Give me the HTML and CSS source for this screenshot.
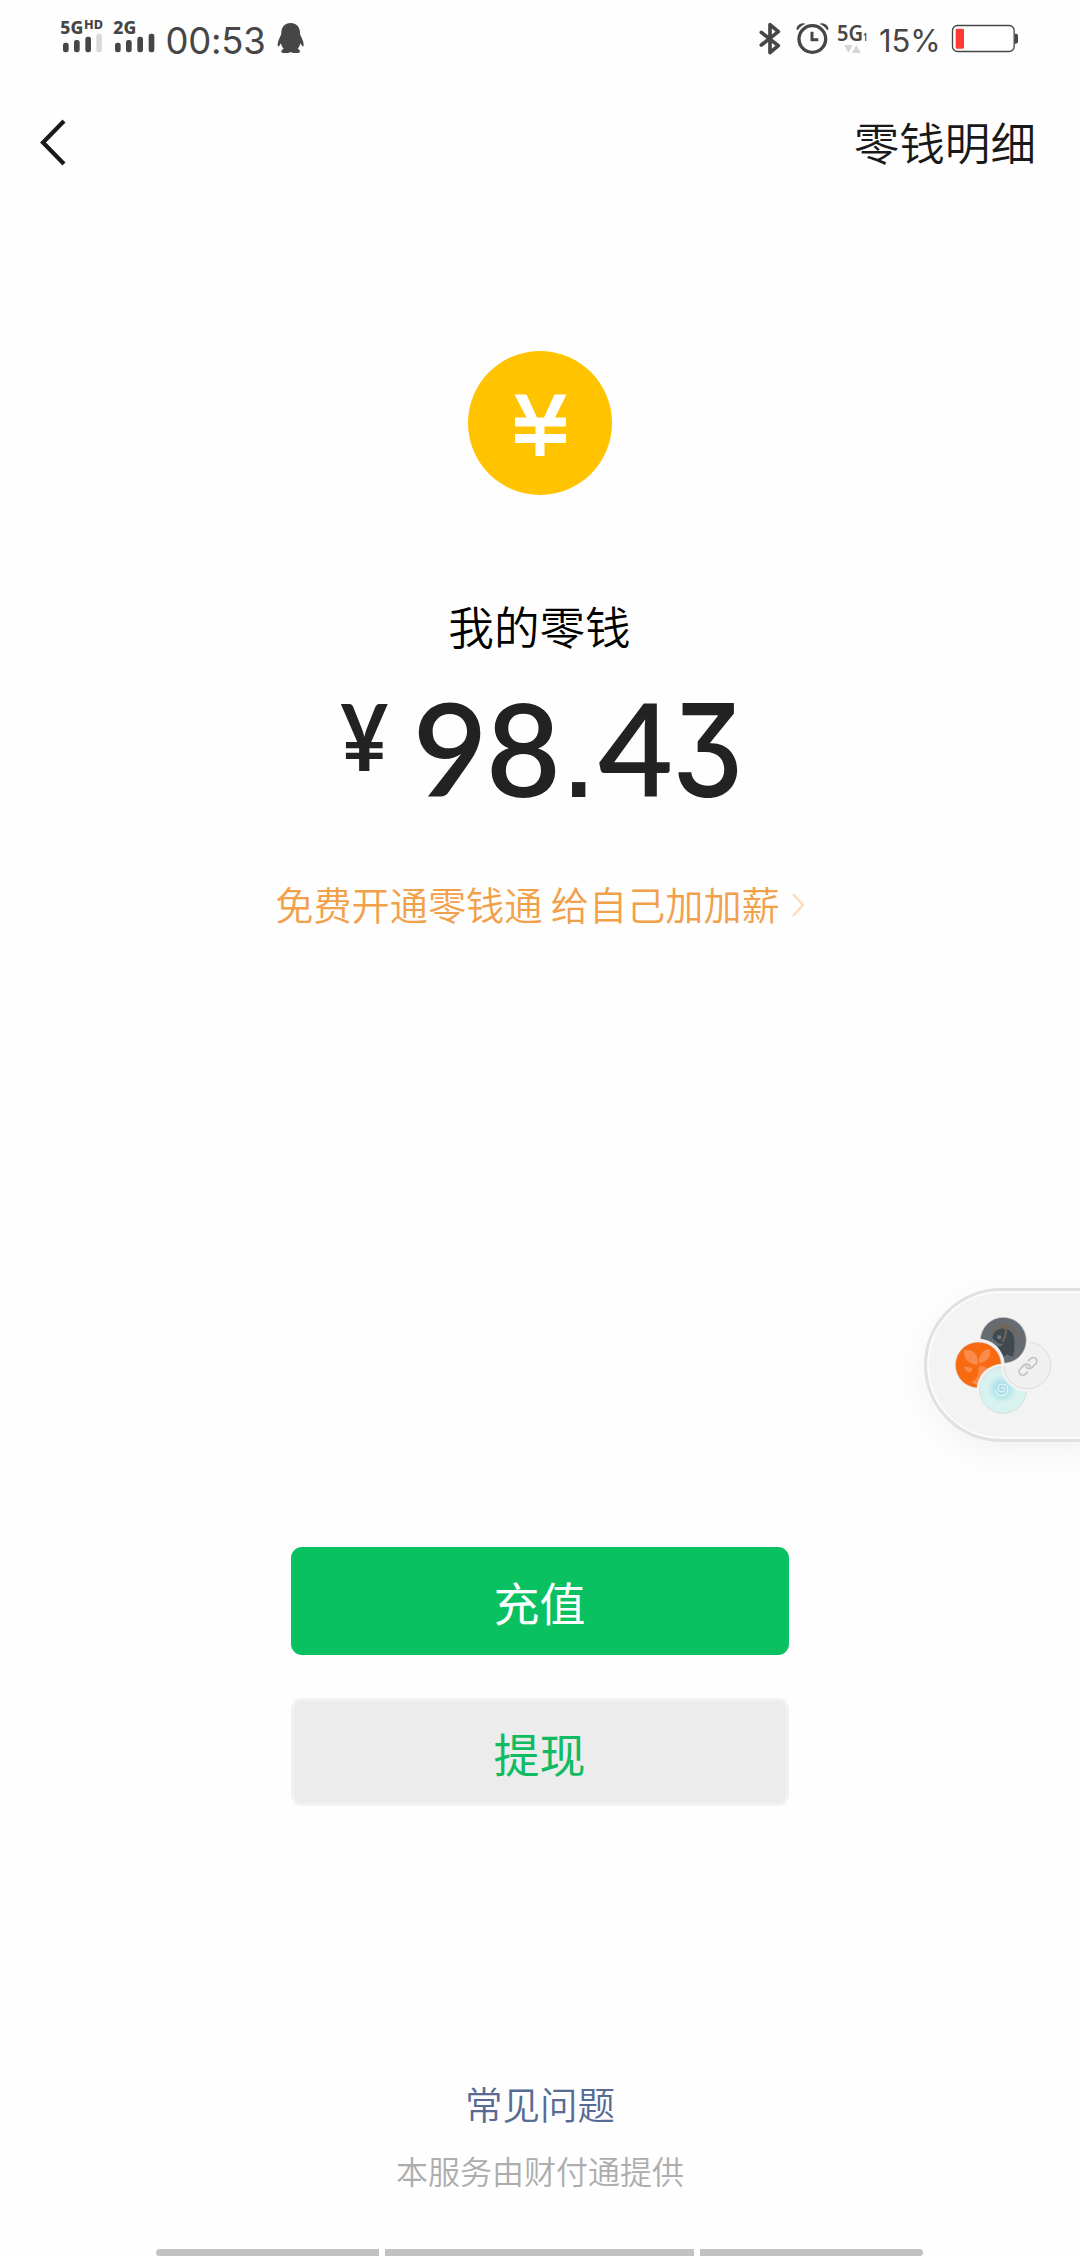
FILE: index.html
```html
<!DOCTYPE html>
<html lang="zh-CN">
<head>
<meta charset="utf-8">
<title>我的零钱</title>
<link rel="stylesheet" href="styles.css">
</head>
<body>
<div class="screen">
  <header class="status">
    <div class="status-left">
      <svg class="signals" viewBox="60 0 300 240">
        <text class="net" x="61" y="101" font-size="53" textLength="69" lengthAdjust="spacingAndGlyphs">5G</text>
        <text class="net" x="132" y="87" font-size="35" textLength="57" lengthAdjust="spacingAndGlyphs">HD</text>
        <text class="net" x="220" y="101" font-size="53" textLength="69" lengthAdjust="spacingAndGlyphs">2G</text>
        <g fill="#464646">
          <rect x="69" y="128" width="17" height="29" rx="7"/><rect x="102" y="120" width="17" height="37" rx="7"/><rect x="136" y="110" width="17" height="47" rx="7"/>
          <rect x="225" y="128" width="17" height="29" rx="7"/><rect x="258" y="120" width="17" height="37" rx="7"/><rect x="292" y="110" width="17" height="47" rx="7"/><rect x="326" y="101" width="17" height="56" rx="7"/>
        </g>
        <rect x="169" y="101" width="17" height="56" rx="7" fill="#dadada"/>
      </svg>
      <span class="clock">00:53</span>
      <svg class="penguin" viewBox="700 0 100 240">
        <path fill="#464646" d="M753 69c-18 0-28 13-28 29 0 5-1 7-3 11-4 9-9 19-8 28 0 3 3 3 5 0l5-7c1 6 4 12 8 16-4 2-7 5-7 9 0 3 5 4 13 4 7 0 12-1 15-3 3 2 8 3 15 3 8 0 13-1 13-4 0-4-3-7-7-9 4-4 7-10 8-16l5 7c2 3 4 3 5 0 1-9-4-19-8-28-2-4-3-6-3-11 0-16-10-29-28-29z"/>
      </svg>
    </div>
    <div class="status-right">
      <svg class="bluetooth" viewBox="50 0 80 240">
        <path d="M66 97l51 40-25 21V74l25 21-51 40" fill="none" stroke="#464646" stroke-width="11" stroke-linejoin="round" stroke-linecap="round"/>
      </svg>
      <svg class="alarm" viewBox="160 0 120 240">
        <g fill="none" stroke="#464646">
          <circle cx="218" cy="117" r="40" stroke-width="10"/>
          <path d="M217 95v24h19" stroke-width="9"/>
        </g>
        <path fill="#464646" d="M171 89c-2-10 9-20 22-19l4 2c-10 4-17 10-22 18zM266 89c2-10-9-20-22-19l-4 2c10 4 17 10 22 18z"/>
      </svg>
      <svg class="data" viewBox="285 0 120 240">
        <text class="data-label" x="291" y="123" font-size="66" textLength="78" lengthAdjust="spacingAndGlyphs">5G</text>
        <text class="data-label" x="369" y="123" font-size="34" textLength="14" lengthAdjust="spacingAndGlyphs">1</text>
        <path fill="#d6d6d6" d="M312 135h26l-13 24zM336 159h27l-14-24z"/>
      </svg>
      <span class="percent">15%</span>
      <svg class="battery" viewBox="630 0 210 240">
        <path fill="#464646" d="M824 101h4q6 0 6 7v16q0 7-6 7h-4z"/>
        <rect x="637.500" y="76.500" width="185" height="78" rx="15" fill="#fff" stroke="#464646" stroke-width="4"/>
        <rect x="647" y="86" width="25" height="60" rx="4" fill="#ff3b30"/>
      </svg>
    </div>
  </header>

  <nav class="nav">
    <svg class="back" viewBox="0 0 28 48"><path d="M25 2 4 23.500 25 45" fill="none" stroke="#191919" stroke-width="4.200"/></svg>
    <a class="detail">零钱明细</a>
  </nav>

  <main class="wallet">
    <svg class="coin" viewBox="0 0 144 144">
      <circle cx="72" cy="72" r="72" fill="#ffc300"/>
      <path fill="#fff" d="M46.500 43.500h12L69 66.500h7L86.500 43.500h12L87 66.500h11v9H76.500v7.500H98v9H76.500v13h-9V92H47v-9h20.500v-7.500H47v-9h11.500z"/>
    </svg>
    <h1 class="label">我的零钱</h1>
    <div class="balance"><span class="yen">¥</span><span class="digits">98<span class="dot">.</span>4<span class="three">3</span></span></div>
    <a class="promo">免费开通零钱通 给自己加加薪<svg class="chevron" viewBox="0 0 12 24"><path d="M1 1l10 11L1 23" fill="none" stroke="#fbdcbd" stroke-width="2.400"/></svg></a>
    <div class="actions">
      <button class="btn primary">充值</button>
      <button class="btn secondary">提现</button>
    </div>
  </main>

  <footer class="foot">
    <a class="faq">常见问题</a>
    <p class="provider">本服务由财付通提供</p>
    <div class="gesture"><i class="bar first"></i><i class="bar middle"></i><i class="bar last"></i></div>
  </footer>

  <aside class="float">
    <svg class="float-icons" viewBox="150 155 320 320">
      <defs>
        <mask id="m1"><rect x="100" y="100" width="400" height="400" fill="#fff"/><circle cx="235" cy="314" r="79" fill="#000"/></mask>
        <mask id="m2"><rect x="100" y="100" width="400" height="400" fill="#fff"/><circle cx="309" cy="389" r="79" fill="#000"/></mask>
        <mask id="m3"><rect x="100" y="100" width="400" height="400" fill="#fff"/><circle cx="382" cy="315" r="79" fill="#000"/></mask>
        <mask id="m4"><rect x="100" y="100" width="400" height="400" fill="#fff"/><circle cx="310" cy="240" r="79" fill="#000"/></mask>
        <radialGradient id="sea"><stop offset="0" stop-color="#a0d0ef"/><stop offset=".4" stop-color="#abe2e8"/><stop offset="1" stop-color="#d8f2f0"/></radialGradient>
      </defs>
      <g mask="url(#m1)">
        <circle cx="310" cy="240" r="69" fill="#666c72" stroke="#d5d5d5" stroke-width="2"/>
        <path fill="#404850" d="M279 225c5-14 20-22 35-20 18 2 29 15 29 34v28c0 9-5 14-2 20-8 2-16-2-20-5-3 5-9 7-18 5-8-12-14-20-14-30 9 3 18 0 21-7-10 2-19-2-24-8-6-5-10-8-7-17z"/>
        <circle cx="298" cy="231" r="6" fill="#737b82"/>
        <path fill="none" stroke="#766550" stroke-width="6" d="M275 220c15-34 65-34 78 12M315 198c6 17 2 32-7 47"/>
      </g>
      <g mask="url(#m2)">
        <circle cx="235" cy="314" r="69" fill="#f76a12" stroke="#ddd" stroke-width="2"/>
        <path fill="#fa8b4a" d="M192 270c27-5 45 12 41 43-27 0-43-18-41-43zM269 266c5 23-7 41-32 41-1-23 10-39 32-41zM192 321c11-2 21-1 26 6-5 13-21 11-26-6zM236 319c12-3 22 1 31 9l-18 14-14 35-23-12c18-4 25-22 24-46z"/>
      </g>
      <g mask="url(#m3)">
        <circle cx="309" cy="389" r="70" fill="#d8f2f0" stroke="#cfd5d5" stroke-width="2"/>
        <circle cx="306" cy="386" r="43" fill="url(#sea)"/>
        <path d="M306 387c-5-6 7-9 8-1 1 11-19 12-20-2-1-17 28-18 29 4 1 22-35 25-37 0" fill="none" stroke="#e1f5f8" stroke-width="4"/>
      </g>
      <g mask="url(#m4)">
        <circle cx="382" cy="315" r="70" fill="#f0f0f0" stroke="#cfcfcf" stroke-width="2"/>
        <g transform="translate(384 318) rotate(-45)" fill="none" stroke="#c2c2c2" stroke-width="5" stroke-linecap="round">
          <path d="M-13 11h-9a11 11 0 0 1 0-22h17a11 11 0 0 1 9 16"/>
          <path d="M13-11h9a11 11 0 0 1 0 22H5a11 11 0 0 1-9-16"/>
        </g>
      </g>
    </svg>
  </aside>
</div>
</body>
</html>
```
FILE: styles.css
```css
* { box-sizing: border-box; }

body {
  margin: 0;
  background: #fefefe;
  font-family: "Noto Sans CJK SC", sans-serif;
  font-weight: 350;
}

svg { display: block; flex: none; }

.screen {
  position: relative;
  display: flex;
  flex-direction: column;
  width: 1080px;
  height: 2256px;
  overflow: hidden;
}

.status {
  display: flex;
  justify-content: space-between;
  height: 80px;
  padding: 0 60px;
  color: #464646;
}

.status-left, .status-right { display: flex; align-items: center; }
.signals { width: 100px; height: 80px; }
.net { font-family: "Noto Sans", sans-serif; font-weight: 800; fill: #464646; }
.data-label { font-family: "Noto Sans", sans-serif; font-weight: 600; fill: #464646; }
.clock {
  width: 113px;
  padding: 1px 2px 0 0;
  text-align: center;
  font: 400 36.500px/80px Inter, sans-serif;
  letter-spacing: -.3px;
}
.penguin { width: 33.330px; height: 80px; }
.bluetooth { width: 26.670px; height: 80px; }
.alarm { width: 40px; height: 80px; margin-left: 10px; }
.data { width: 40px; height: 80px; margin-left: 1.670px; }
.percent {
  width: 75.330px;
  padding: 1px 5px 0 0;
  text-align: center;
  font: 400 31px/80px Inter, sans-serif;
}
.battery { width: 70px; height: 80px; }

.nav {
  display: flex;
  align-items: center;
  justify-content: space-between;
  height: 126px;
  padding: 0 44px 0 39px;
}
.back { width: 28px; height: 48px; }
.detail { padding-bottom: 4px; font-size: 45.600px; line-height: 60px; color: #191919; }

.wallet {
  display: flex;
  flex-direction: column;
  align-items: center;
  padding-right: 1px;
}
.coin { width: 144px; height: 144px; margin-top: 145px; }
.label {
  margin: 97px 0 0;
  font-size: 45.600px;
  font-weight: 350;
  line-height: 66px;
  color: #000;
}
.balance {
  display: flex;
  align-items: flex-start;
  height: 140px;
  margin-top: 12px;
  color: #222;
  font-family: Lato, sans-serif;
  font-weight: 600;
}
.yen {
  padding-top: 16px;
  margin-right: 24px;
  font-size: 91px;
  font-weight: 700;
  line-height: 100px;
  letter-spacing: -2px;
  transform: scaleX(.91);
}
.digits { font-size: 129px; line-height: 155px; letter-spacing: -1.500px; }
.dot { font: 400 140px/1 "Liberation Sans", sans-serif; letter-spacing: 0; }
.three {
  display: inline-block;
  margin-right: -10px;
  font-family: Inter, sans-serif;
  font-weight: 500;
  font-feature-settings: "cv09";
  transform: scaleX(.88);
  transform-origin: left;
}
.promo {
  display: flex;
  align-items: center;
  gap: 12px;
  height: 54px;
  margin-top: 66px;
  font-size: 38.150px;
  color: #f2a04a;
}
.chevron { width: 12px; height: 24px; margin-top: 3px; }
.actions { display: flex; flex-direction: column; gap: 43px; margin-top: 617px; }
.btn {
  width: 498px;
  height: 108px;
  padding: 0;
  border: 0;
  border-radius: 11px;
  font: 400 46px/107px "Noto Sans CJK SC", sans-serif;
}
.primary { background: #09c160; color: #fff; }
.secondary { background: #ececec; border: 3px solid #f2f2f2; line-height: 101px; color: #10bb62; }

.foot {
  display: flex;
  flex-direction: column;
  align-items: center;
  margin-top: auto;
}
.faq { font-size: 37.500px; line-height: 54px; color: #576b95; }
.provider { margin: 17px 0 0; font-size: 32px; line-height: 46px; color: #adadad; }
.gesture { display: flex; gap: 6px; height: 7px; margin: 56px 1px 0 0; }
.bar { height: 7px; background: #c2c2c2; }
.first, .last { width: 223px; }
.first { border-radius: 4px 0 0 4px; }
.middle { width: 309px; }
.last { border-radius: 0 4px 4px 0; }

.float {
  position: absolute;
  left: 924px;
  top: 1288px;
  width: 180px;
  height: 154px;
  padding: 24px 0 0 24px;
  border: 3px solid #e0e0e0;
  border-radius: 77px 0 0 77px;
  background: #f3f3f3;
  box-shadow: 0 10px 34px rgba(0, 0, 0, .05), inset 0 0 0 2px #fbfbfb;
}
.float-icons { width: 106.670px; height: 106.670px; margin: -3px 0 0 -1px; }
```
